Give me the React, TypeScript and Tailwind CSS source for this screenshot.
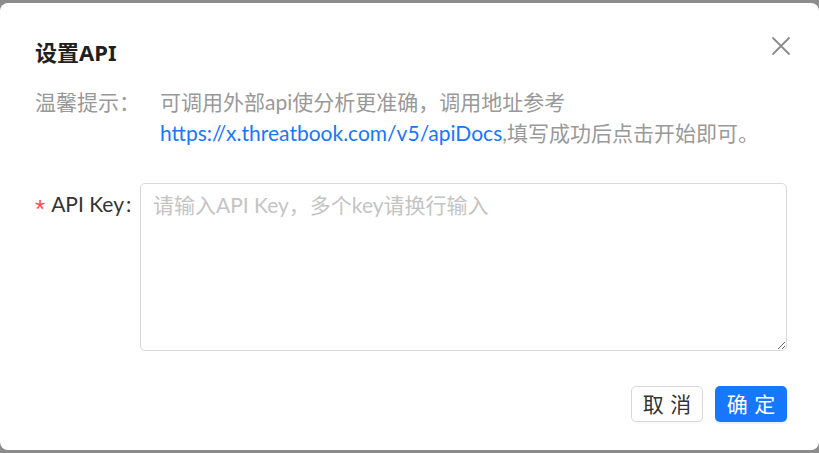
import React from 'react';

const font = { fontFamily: 'Lato, "Noto Sans CJK SC", sans-serif' };
const titleFont = { fontFamily: '"Noto Sans", "Noto Sans CJK SC", sans-serif' };
const starFont = { fontFamily: '"Liberation Sans", sans-serif' };

function CloseIcon() {
  return (
    <svg width="20" height="20" viewBox="0 0 20 20" fill="none" stroke="#8a8a8a" strokeWidth="1.8" strokeLinecap="round">
      <path d="M2 2 L18 18 M18 2 L2 18" />
    </svg>
  );
}

export default function App() {
  return (
    <div className="h-[453px] w-[819px] bg-[#8c8c8c] py-[3px]" style={font}>
      <div className="h-[447px] rounded-lg bg-white pl-[35px] pr-[32px] pt-[33px]">
        {/* Header */}
        <div className="flex items-start justify-between">
          <h1 className="text-[22px] font-bold leading-[32px] text-[#1f1f1f]" style={titleFont}>设置API</h1>
          <button className="mr-[-5px] mt-[-1px] p-[1px]">
            <CloseIcon />
          </button>
        </div>

        {/* Hint */}
        <div className="mt-[18px] flex text-[21px] leading-[31px] text-[#999]">
          <div className="w-[125px] shrink-0">温馨提示：</div>
          <div>
            <div>可调用外部api使分析更准确，调用地址参考</div>
            <div>
              <a className="text-[#1677ff]">https://x.threatbook.com/v5/apiDocs</a>,填写成功后点击开始即可。
            </div>
          </div>
        </div>

        {/* Form */}
        <div className="mt-[35px] flex">
          <label className="flex h-[42px] w-[105px] shrink-0 items-center text-[21px] text-[#333]">
            <span className="mr-[6px] mt-[10px] text-[26px] leading-none text-[#ff4d4f]" style={starFont}>*</span>
            <span>API Key</span>
            <span className="ml-[2px]">:</span>
          </label>
          <textarea
            className="h-[168px] flex-1 rounded-[5px] border border-[#d9d9d9] px-[12px] py-[6px] text-[21px] leading-[30px] text-[#333] outline-none placeholder:text-[#c4c4c4]"
            style={font}
            placeholder="请输入API Key，多个key请换行输入"
          />
        </div>

        {/* Footer */}
        <div className="mt-[35px] flex justify-end gap-[12px]">
          <button className="h-[36px] w-[72px] rounded-[5px] border border-[#d9d9d9] bg-white text-[21px] tracking-[0.3em] text-[#333] shadow-[0_2px_0_rgba(0,0,0,0.02)]">
            <span className="mr-[-0.3em]">取消</span>
          </button>
          <button className="h-[36px] w-[72px] rounded-[5px] bg-[#1677ff] text-[21px] tracking-[0.3em] text-white shadow-[0_2px_0_rgba(5,145,255,0.1)]">
            <span className="mr-[-0.3em]">确定</span>
          </button>
        </div>
      </div>
    </div>
  );
}
